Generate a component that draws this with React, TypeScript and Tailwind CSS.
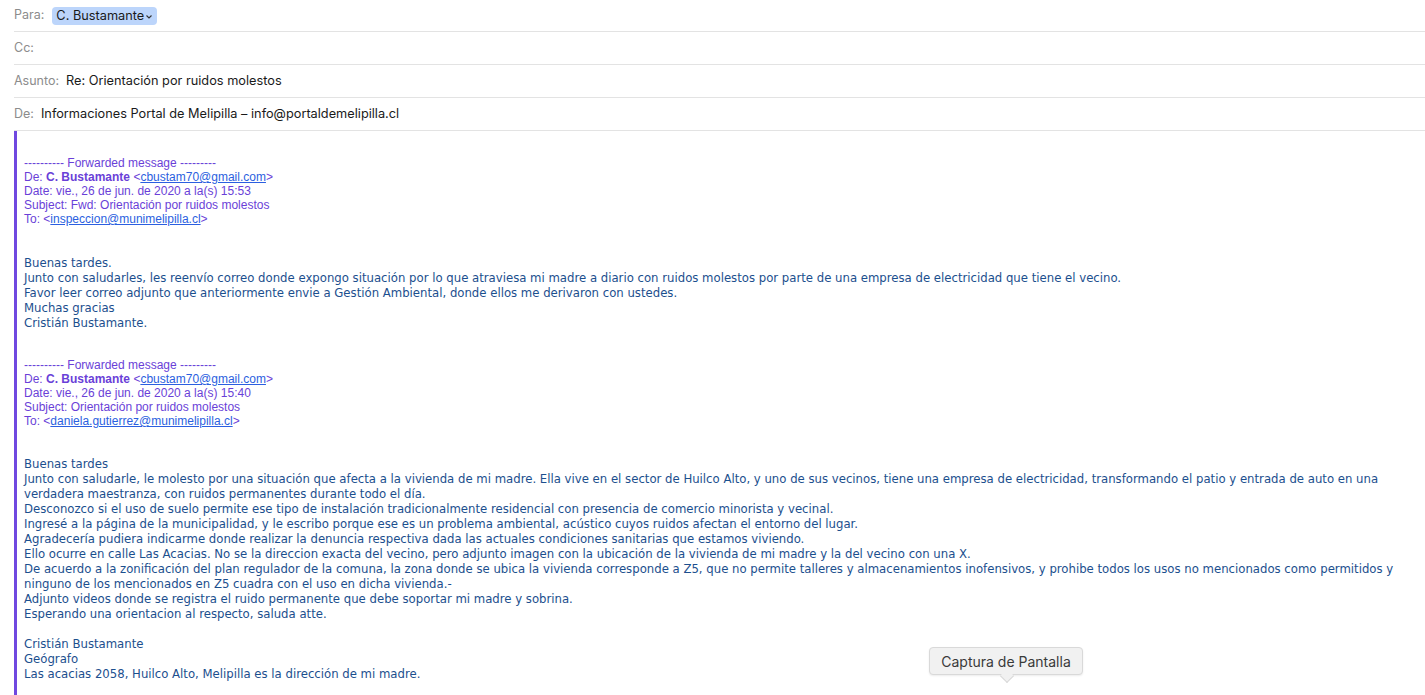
import React from "react";

const Row = ({ label, children, first }: { label: string; children?: React.ReactNode; first?: boolean }) => (
  <div
    className={`flex items-center border-b border-[#e3e3e3] ${first ? "h-[32px]" : "h-[33px]"}`}
    style={{ fontFamily: "Inter, 'Liberation Sans', sans-serif" }}
  >
    <span className="text-[12.5px] text-[#8c8c8c] mr-[7px]">{label}</span>
    {children}
  </div>
);

const Fwd = ({ time, subject, to }: { time: string; subject: string; to: string }) => (
  <div
    className="text-[12px] leading-[14px] text-[#6a3fd8]"
    style={{ fontFamily: "'Liberation Sans', Arial, sans-serif" }}
  >
    <div>---------- Forwarded message ---------</div>
    <div>
      De: <b>C. Bustamante</b> &lt;<span className="text-[#2b5fe0] underline">cbustam70@gmail.com</span>&gt;
    </div>
    <div>Date: vie., 26 de jun. de 2020 a la(s) {time}</div>
    <div>Subject: {subject}</div>
    <div>
      To: &lt;<span className="text-[#2b5fe0] underline">{to}</span>&gt;
    </div>
  </div>
);

const Body = ({ lines }: { lines: string[] }) => (
  <div
    className="text-[13px] leading-[15px] text-[#1c4f8e] whitespace-nowrap"
    style={{ fontFamily: "'DejaVu Sans Condensed', 'DejaVu Sans', sans-serif" }}
  >
    {lines.map((l, i) => (
      <div key={i} className="h-[15px]">
        {l}
      </div>
    ))}
  </div>
);

export default function App() {
  return (
    <div className="w-[1425px] h-[695px] bg-white overflow-hidden relative">
      <div className="ml-[14px]">
        <Row label="Para:" first>
          <span className="inline-flex items-center bg-[#bcd5fb] rounded-[4px] h-[18px] pl-[4px] pr-[4px] text-[12.75px] text-[#1a1a1a] ml-[1px]">
            C. Bustamante
            <svg width="8" height="6" viewBox="0 0 8 6" className="ml-[1px] mt-[2px]">
              <path d="M1.5 1.5 L4 4 L6.5 1.5" fill="none" stroke="#333" strokeWidth="1.1" />
            </svg>
          </span>
        </Row>
        <Row label="Cc:" />
        <Row label="Asunto:">
          <span className="text-[12.75px] text-[#1a1a1a]">Re: Orientación por ruidos molestos</span>
        </Row>
        <Row label="De:">
          <span className="text-[12.75px] text-[#1a1a1a]">
            Informaciones Portal de Melipilla – info@portaldemelipilla.cl
          </span>
        </Row>
      </div>
      <div className="ml-[14px] border-l-[3px] border-[#7048e0] pl-[7px] pt-[25px] h-[600px]">
        <Fwd time="15:53" subject="Fwd: Orientación por ruidos molestos" to="inspeccion@munimelipilla.cl" />
        <div className="h-[29px]" />
        <Body
          lines={[
            "Buenas tardes.",
            "Junto con saludarles, les reenvío correo donde expongo situación por lo que atraviesa mi madre a diario con ruidos molestos por parte de una empresa de electricidad que tiene el vecino.",
            "Favor leer correo adjunto que anteriormente envie a Gestión Ambiental, donde ellos me derivaron con ustedes.",
            "Muchas gracias",
            "Cristián Bustamante.",
          ]}
        />
        <div className="h-[28px]" />
        <Fwd time="15:40" subject="Orientación por ruidos molestos" to="daniela.gutierrez@munimelipilla.cl" />
        <div className="h-[28px]" />
        <Body
          lines={[
            "Buenas tardes",
            "Junto con saludarle, le molesto por una situación que afecta a la vivienda de mi madre. Ella vive en el sector de Huilco Alto, y uno de sus vecinos, tiene una empresa de electricidad, transformando el patio y entrada de auto en una",
            "verdadera maestranza, con ruidos permanentes durante todo el día.",
            "Desconozco si el uso de suelo permite ese tipo de instalación tradicionalmente residencial con presencia de comercio minorista y vecinal.",
            "Ingresé a la página de la municipalidad, y le escribo porque ese es un problema ambiental, acústico cuyos ruidos afectan el entorno del lugar.",
            "Agradecería pudiera indicarme donde realizar la denuncia respectiva dada las actuales condiciones sanitarias que estamos viviendo.",
            "Ello ocurre en calle Las Acacias. No se la direccion exacta del vecino, pero adjunto imagen con la ubicación de la vivienda de mi madre y la del vecino con una X.",
            "De acuerdo a la zonificación del plan regulador de la comuna, la zona donde se ubica la vivienda corresponde a Z5, que no permite talleres y almacenamientos inofensivos, y prohibe todos los usos no mencionados como permitidos y",
            "ninguno de los mencionados en Z5 cuadra con el uso en dicha vivienda.-",
            "Adjunto videos donde se registra el ruido permanente que debe soportar mi madre y sobrina.",
            "Esperando una orientacion al respecto, saluda atte.",
            "",
            "Cristián Bustamante",
            "Geógrafo",
            "Las acacias 2058, Huilco Alto, Melipilla es la dirección de mi madre.",
          ]}
        />
      </div>
      <div className="absolute left-[929px] top-[647px]">
        <div
          className="relative h-[28px] w-[154px] flex items-center justify-center rounded-[4px] border border-[#d9d9d9] bg-[#f1f1f1] text-[14px] text-[#3a3a3a] shadow-[0_1px_2px_rgba(0,0,0,0.08)]"
          style={{ fontFamily: "Inter, 'Liberation Sans', sans-serif" }}
        >
          Captura de Pantalla
          <div className="absolute left-[72px] top-[23px] w-[10px] h-[10px] rotate-45 bg-[#f1f1f1] border-r border-b border-[#d9d9d9]" />
        </div>
      </div>
    </div>
  );
}
